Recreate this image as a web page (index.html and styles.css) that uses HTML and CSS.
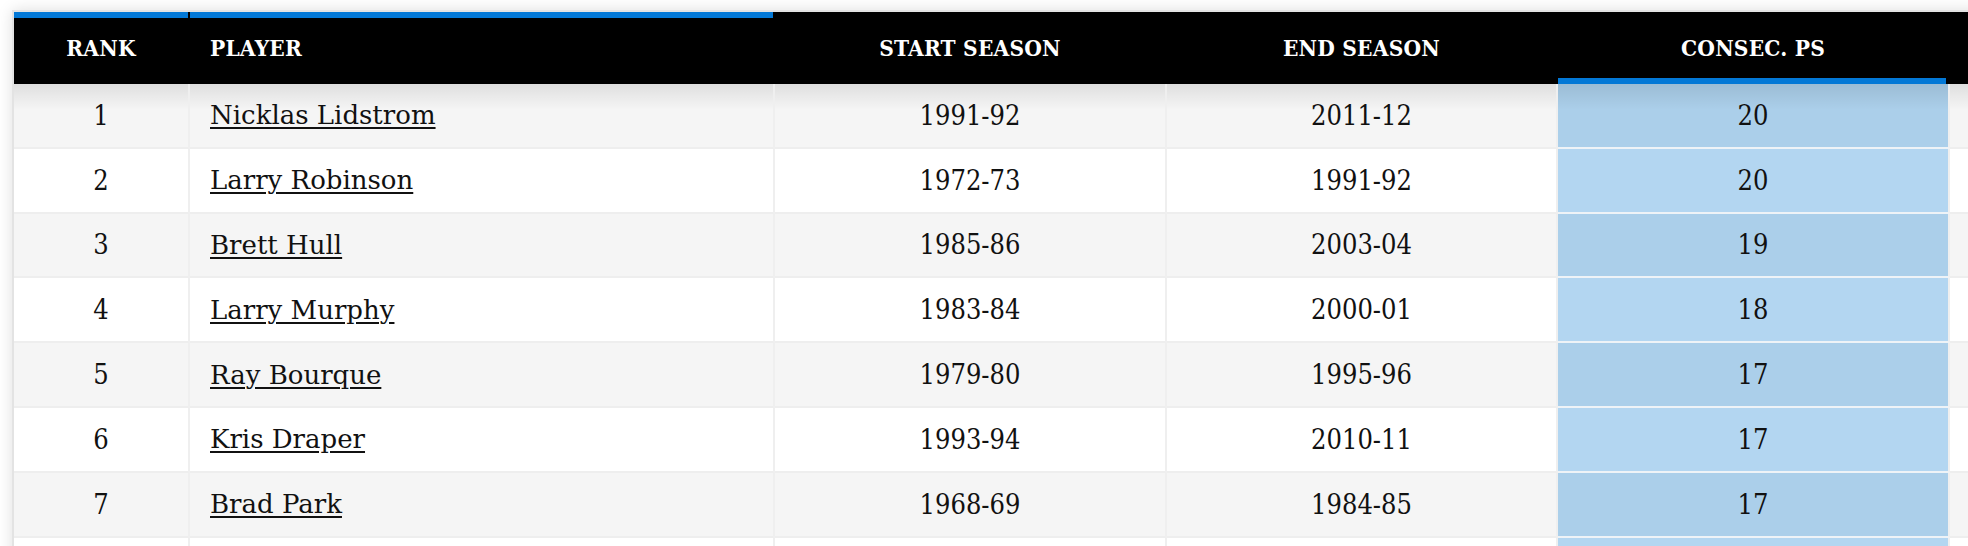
FILE: index.html
```html
<!DOCTYPE html>
<html lang="en">
<head>
<meta charset="utf-8">
<title>Consecutive Playoff Seasons</title>
<link rel="stylesheet" href="styles.css">
</head>
<body>
<div class="table-wrap">
  <div class="table">
    <div class="row head">
      <div class="cell th sorted-top center">RANK</div>
      <div class="cell th sorted-top left">PLAYER</div>
      <div class="cell th center">START SEASON</div>
      <div class="cell th center">END SEASON</div>
      <div class="cell th sorted-bottom center">CONSEC. PS</div>
      <div class="cell th center"></div>
    </div>
    <div class="row body odd first">
      <div class="cell center">1</div>
      <div class="cell left"><a href="#">Nicklas Lidstrom</a></div>
      <div class="cell center">1991-92</div>
      <div class="cell center">2011-12</div>
      <div class="cell center hl">20</div>
      <div class="cell"></div>
    </div>
    <div class="row body even">
      <div class="cell center">2</div>
      <div class="cell left"><a href="#">Larry Robinson</a></div>
      <div class="cell center">1972-73</div>
      <div class="cell center">1991-92</div>
      <div class="cell center hl">20</div>
      <div class="cell"></div>
    </div>
    <div class="row body odd">
      <div class="cell center">3</div>
      <div class="cell left"><a href="#">Brett Hull</a></div>
      <div class="cell center">1985-86</div>
      <div class="cell center">2003-04</div>
      <div class="cell center hl">19</div>
      <div class="cell"></div>
    </div>
    <div class="row body even">
      <div class="cell center">4</div>
      <div class="cell left"><a href="#">Larry Murphy</a></div>
      <div class="cell center">1983-84</div>
      <div class="cell center">2000-01</div>
      <div class="cell center hl">18</div>
      <div class="cell"></div>
    </div>
    <div class="row body odd">
      <div class="cell center">5</div>
      <div class="cell left"><a href="#">Ray Bourque</a></div>
      <div class="cell center">1979-80</div>
      <div class="cell center">1995-96</div>
      <div class="cell center hl">17</div>
      <div class="cell"></div>
    </div>
    <div class="row body even">
      <div class="cell center">6</div>
      <div class="cell left"><a href="#">Kris Draper</a></div>
      <div class="cell center">1993-94</div>
      <div class="cell center">2010-11</div>
      <div class="cell center hl">17</div>
      <div class="cell"></div>
    </div>
    <div class="row body odd">
      <div class="cell center">7</div>
      <div class="cell left"><a href="#">Brad Park</a></div>
      <div class="cell center">1968-69</div>
      <div class="cell center">1984-85</div>
      <div class="cell center hl">17</div>
      <div class="cell"></div>
    </div>
    <div class="row body even">
      <div class="cell center"></div>
      <div class="cell left"></div>
      <div class="cell center"></div>
      <div class="cell center"></div>
      <div class="cell center hl"></div>
      <div class="cell"></div>
    </div>
  </div>
</div>
</body>
</html>
```

FILE: styles.css
```css
html, body {
  margin: 0;
  padding: 0;
  background: #ffffff;
  overflow: hidden;
}

body {
  font-family: "DejaVu Serif Condensed", "DejaVu Serif", serif;
  color: #111111;
}

.table-wrap {
  margin: 10px 0 0 12px;
  border-top: 2px solid #e3e3e3;
  border-left: 2px solid #e3e3e3;
  box-shadow: 0 0 14px rgba(0, 0, 0, 0.13);
  width: 2400px;
}

.row {
  display: grid;
  grid-template-columns: 176px 585px 392px 391px 392px 464px;
}

.cell {
  box-sizing: border-box;
  display: flex;
  align-items: center;
  border-right: 2px solid #efefef;
  border-bottom: 2px solid #eeeeee;
}

.center { justify-content: center; }
.left { justify-content: flex-start; padding-left: 20px; }

.head .cell {
  height: 72px;
  background-color: #000000;
  border-right-color: #000000;
  border-bottom: 0;
  color: #ffffff;
  font-weight: bold;
  font-size: 22.5px;
  letter-spacing: 0.2px;
}

.head .sorted-top {
  background-image: linear-gradient(#0378d6, #0378d6);
  background-repeat: no-repeat;
  background-size: 100% 6px;
  background-position: top left;
}

.head .sorted-bottom {
  background-image: linear-gradient(#0378d6, #0378d6);
  background-repeat: no-repeat;
  background-size: calc(100% - 2px) 6px;
  background-position: bottom left;
}

.body .cell {
  height: 64.8px;
  font-size: 27px;
}

.odd .cell { background-color: #f5f5f5; }
.even .cell { background-color: #ffffff; }

.odd .cell.hl { background-color: #abcfea; border-bottom-color: #eef3f7; }
.even .cell.hl { background-color: #b3d6f1; border-bottom-color: #eef3f7; }

.first .cell {
  background-image: linear-gradient(to bottom, rgba(0, 0, 0, 0.09), rgba(0, 0, 0, 0) 26px);
}

.cell a {
  font-family: "DejaVu Serif", serif;
  font-size: 26px;
  color: #111111;
  text-decoration: underline;
  text-decoration-thickness: 2px;
  text-underline-offset: 3px;
}
```
